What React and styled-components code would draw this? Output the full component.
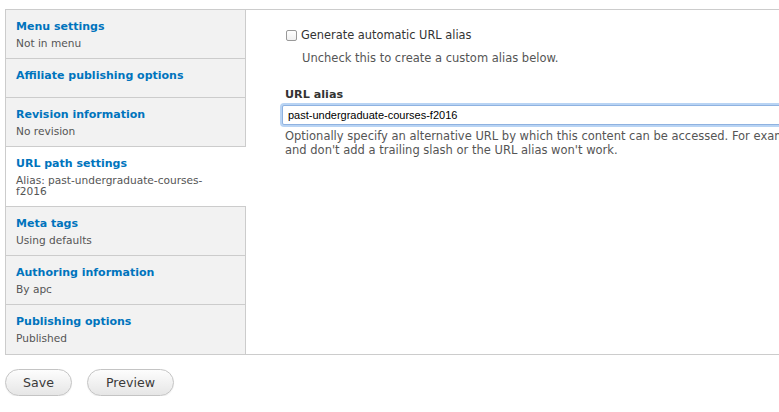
import React, { useState } from "react";
import styled, { createGlobalStyle } from "styled-components";

const GlobalStyle = createGlobalStyle`
  html, body {
    margin: 0;
    padding: 0;
    background: #fff;
    overflow: hidden;
  }
  body {
    font-family: "DejaVu Sans", "Liberation Sans", sans-serif;
    color: #333;
  }
`;

const Page = styled.div`
  padding: 9px 0 0 5px;
  width: 1000px;
`;

const Box = styled.div`
  display: flex;
  border: 1px solid #ccc;
  border-right: none;
  height: 346px;
  box-sizing: border-box;
`;

const Menu = styled.ul`
  list-style: none;
  margin: 0;
  padding: 0;
  width: 239px;
  flex: none;
  background: #f2f2f2;
  border-right: 1px solid #ccc;
`;

const Tab = styled.li`
  padding: 9px 10px ${(p) => (p.$hasSummary ? "9px" : "13px")} 10px;
  border-bottom: 1px solid #ccc;
  background: ${(p) => (p.$active ? "#fff" : "#f2f2f2")};
  margin-right: ${(p) => (p.$active ? "-1px" : "0")};
  cursor: pointer;
  &:last-child {
    border-bottom: none;
  }
`;

const TabTitle = styled.strong`
  display: block;
  font-size: 11px;
  line-height: 16px;
  font-weight: 700;
  color: #0074bd;
`;

const TabSummary = styled.span`
  display: block;
  margin-top: 3px;
  font-size: 10.6px;
  line-height: 11px;
  color: #555;
  padding-right: 20px;
`;

const Panel = styled.div`
  flex: 1;
  padding: 17px 0 0 39px;
`;

const CheckRow = styled.label`
  display: flex;
  align-items: center;
  gap: 4px;
  font-size: 11.4px;
  line-height: 16px;
  color: #333;
`;

const Check = styled.input`
  appearance: none;
  width: 11px;
  height: 11px;
  margin: 1px 0 0 1px;
  border: 1px solid #999;
  border-radius: 2px;
  background: linear-gradient(#fff, #f0f0f0);
  box-sizing: border-box;
  &:checked {
    background: #0074bd;
    border-color: #0074bd;
  }
`;

const Description = styled.div`
  font-size: 11.5px;
  line-height: 14px;
  color: #555;
  padding-left: ${(p) => p.$indent || 0}px;
  margin-top: ${(p) => p.$top || 0}px;
  white-space: ${(p) => (p.$nowrap ? "nowrap" : "normal")};
`;

const FieldLabel = styled.label`
  display: block;
  margin-top: 22px;
  font-size: 11.2px;
  font-weight: 700;
  line-height: 16px;
  color: #333;
`;

const TextInput = styled.input`
  display: block;
  width: 700px;
  height: 20px;
  margin: 2px 0 0 -3px;
  padding: 0 5px;
  box-sizing: border-box;
  font-family: "Liberation Sans", Arial, sans-serif;
  font-size: 11px;
  color: #000;
  border: 1px solid #8fb2e0;
  border-radius: 2px;
  box-shadow: 0 0 0 2px #b9d4f4;
  outline: none;
`;

const Actions = styled.div`
  display: flex;
  gap: 15px;
  padding-top: 14px;
`;

const Button = styled.button`
  height: 27px;
  padding: 0 ${(p) => p.$pad}px;
  border: 1px solid #c4c4c4;
  border-radius: 14px;
  background: linear-gradient(#fdfdfd, #e6e6e6);
  font-family: "DejaVu Sans", "Liberation Sans", sans-serif;
  font-size: 12.6px;
  color: #3a3a3a;
  cursor: pointer;
  box-shadow: 0 1px 1px rgba(0, 0, 0, 0.06);
`;

const tabs = [
  { title: "Menu settings", summary: "Not in menu" },
  { title: "Affiliate publishing options" },
  { title: "Revision information", summary: "No revision" },
  { title: "URL path settings", summary: "Alias: past-undergraduate-courses-f2016" },
  { title: "Meta tags", summary: "Using defaults" },
  { title: "Authoring information", summary: "By apc" },
  { title: "Publishing options", summary: "Published" },
];

export default function App() {
  const [active, setActive] = useState(3);
  const [auto, setAuto] = useState(false);
  const [alias, setAlias] = useState("past-undergraduate-courses-f2016");

  return (
    <>
      <GlobalStyle />
      <Page>
        <Box>
          <Menu>
            {tabs.map((t, i) => (
              <Tab
                key={t.title}
                $active={i === active}
                $hasSummary={!!t.summary}
                onClick={() => setActive(i)}
              >
                <TabTitle>{t.title}</TabTitle>
                {t.summary ? <TabSummary>{t.summary}</TabSummary> : null}
              </Tab>
            ))}
          </Menu>
          <Panel>
            <CheckRow>
              <Check
                type="checkbox"
                checked={auto}
                onChange={(e) => setAuto(e.target.checked)}
              />
              Generate automatic URL alias
            </CheckRow>
            <Description $indent={17} $top={8}>
              Uncheck this to create a custom alias below.
            </Description>
            <FieldLabel>URL alias</FieldLabel>
            <TextInput value={alias} onChange={(e) => setAlias(e.target.value)} />
            <Description $top={4} $nowrap>
              Optionally specify an alternative URL by which this content can be accessed. For example, type "about" when writing an about page. Use a relative path
              <br />
              and don't add a trailing slash or the URL alias won't work.
            </Description>
          </Panel>
        </Box>
        <Actions>
          <Button $pad={17}>Save</Button>
          <Button $pad={18}>Preview</Button>
        </Actions>
      </Page>
    </>
  );
}
